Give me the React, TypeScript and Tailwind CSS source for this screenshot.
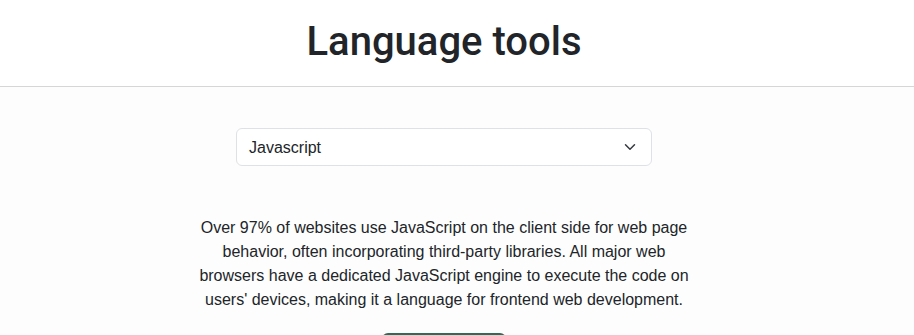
import React from "react";

export default function App() {
  return (
    <div className="min-h-screen bg-[#fdfdfd] text-[#212529]" style={{ fontFamily: "'Liberation Sans', Arial, sans-serif" }}>
      <header className="h-[87px] border-b border-[#d6d6d6] bg-white">
        <div className="w-[888px] h-full flex items-center justify-center">
          <h1 className="text-[40px] font-medium leading-none pb-[2px]" style={{ fontFamily: "Roboto, sans-serif" }}>Language tools</h1>
        </div>
      </header>
      <main className="w-[888px] flex flex-col items-center pt-[41px]">
        <div className="w-[416px] h-[38px] rounded-[6px] border border-[#dee2e6] bg-white flex items-center justify-between pl-[12px] pr-[15px]">
          <span className="text-[16px] pt-[1px]">Javascript</span>
          <svg width="12" height="12" viewBox="0 0 16 16" fill="none" stroke="#343a40" strokeWidth="2" strokeLinecap="round" strokeLinejoin="round">
            <path d="M2 5l6 6 6-6" />
          </svg>
        </div>
        <p className="mt-[50px] w-[505px] text-center text-[16px] leading-[24px] text-[#212529]">
          Over 97% of websites use JavaScript on the client side for web page behavior, often incorporating third-party libraries. All major web browsers have a dedicated JavaScript engine to execute the code on users' devices, making it a language for frontend web development.
        </p>
        <button className="mt-[21px] w-[124px] h-[38px] rounded-[6px] bg-[#2f6b57] text-white text-[16px]">Translate</button>
      </main>
    </div>
  );
}
